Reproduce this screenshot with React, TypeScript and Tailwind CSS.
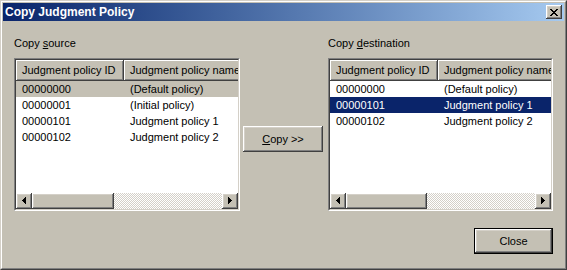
import React from "react";

const raised =
  "bg-[#c4c0b4] shadow-[inset_-1px_-1px_0_#404040,inset_1px_1px_0_#ffffff,inset_-2px_-2px_0_#808080,inset_2px_2px_0_#d4d0c8]";

const headerCell =
  "bg-[#c4c0b4] shadow-[inset_-1px_-1px_0_#404040,inset_1px_1px_0_#ffffff,inset_-2px_-2px_0_#808080]";

type Row = { id: string; name: string };

const sourceRows: Row[] = [
  { id: "00000000", name: "(Default policy)" },
  { id: "00000001", name: "(Initial policy)" },
  { id: "00000101", name: "Judgment policy 1" },
  { id: "00000102", name: "Judgment policy 2" },
];

const destRows: Row[] = [
  { id: "00000000", name: "(Default policy)" },
  { id: "00000101", name: "Judgment policy 1" },
  { id: "00000102", name: "Judgment policy 2" },
];

const Arrow = ({ dir }: { dir: "left" | "right" }) => (
  <svg width="16" height="16" viewBox="0 0 16 16" shapeRendering="crispEdges">
    {dir === "left" ? (
      <g fill="#000">
        <rect x="6" y="7" width="1" height="1" />
        <rect x="7" y="6" width="1" height="3" />
        <rect x="8" y="5" width="1" height="5" />
        <rect x="9" y="4" width="1" height="7" />
      </g>
    ) : (
      <g fill="#000">
        <rect x="6" y="4" width="1" height="7" />
        <rect x="7" y="5" width="1" height="5" />
        <rect x="8" y="6" width="1" height="3" />
        <rect x="9" y="7" width="1" height="1" />
      </g>
    )}
  </svg>
);

const CloseGlyph = () => (
  <svg width="8" height="7" viewBox="0 0 8 7" shapeRendering="crispEdges">
    <g fill="#000">
      <rect x="0" y="0" width="2" height="1" />
      <rect x="6" y="0" width="2" height="1" />
      <rect x="1" y="1" width="2" height="1" />
      <rect x="5" y="1" width="2" height="1" />
      <rect x="2" y="2" width="4" height="1" />
      <rect x="3" y="3" width="2" height="1" />
      <rect x="2" y="4" width="4" height="1" />
      <rect x="1" y="5" width="2" height="1" />
      <rect x="5" y="5" width="2" height="1" />
      <rect x="0" y="6" width="2" height="1" />
      <rect x="6" y="6" width="2" height="1" />
    </g>
  </svg>
);

const ScrollBar = ({ thumb }: { thumb: string }) => (
  <div className="flex h-[16px] shrink-0">
    <div className={`w-[16px] h-[16px] ${raised}`}>
      <Arrow dir="left" />
    </div>
    <div className={`${thumb} h-[16px] shrink-0 ${raised}`} />
    <div className="flex-1 bg-[image:conic-gradient(#ffffff_25%,#d4d0c8_0_50%,#ffffff_0_75%,#d4d0c8_0)] bg-size-[2px_2px]" />
    <div className={`w-[16px] h-[16px] ${raised}`}>
      <Arrow dir="right" />
    </div>
  </div>
);

const ListBox = ({
  width,
  thumb,
  rows,
  selected,
  active,
}: {
  width: string;
  thumb: string;
  rows: Row[];
  selected: number;
  active: boolean;
}) => (
  <div className={`${width} h-[153px] border border-[#808080] border-r-white border-b-white`}>
    <div className="h-full flex flex-col overflow-hidden bg-white border border-[#404040] border-r-[#d4d0c8] border-b-[#d4d0c8]">
      <div className="flex h-[21px] shrink-0 leading-[21px] whitespace-nowrap overflow-hidden">
        <div className={`w-[108px] shrink-0 pl-[6px] ${headerCell}`}>Judgment policy ID</div>
        <div className={`w-[140px] shrink-0 pl-[6px] ${headerCell}`}>Judgment policy name</div>
      </div>
      {rows.map((r, i) => {
        const sel = i === selected;
        return (
          <div
            key={r.id}
            className={`flex h-[16px] leading-[16px] whitespace-nowrap ${
              sel ? (active ? "bg-[#0a246a] text-white" : "bg-[#c4c0b4]") : ""
            }`}
          >
            <div className="w-[108px] shrink-0 pl-[6px]">{r.id}</div>
            <div className="pl-[6px]">{r.name}</div>
          </div>
        );
      })}
      <div className="flex-1" />
      <ScrollBar thumb={thumb} />
    </div>
  </div>
);

export default function App() {
  return (
    <div className="w-[567px] h-[270px] font-['Liberation_Sans',Arial,sans-serif] text-[11px] text-black">
      <div className="h-full border border-[#d4d0c8] border-r-[#404040] border-b-[#404040]">
        <div className="h-full flex flex-col bg-[#c4c0b4] p-px border border-white border-r-[#808080] border-b-[#808080]">
          {/* title bar */}
          <div className="h-[18px] shrink-0 flex items-center justify-between pl-[2px] pr-[2px] bg-linear-to-r from-[#0a246a] to-[#a6caf0]">
            <span className="text-white font-bold text-[12px] leading-[18px]">Copy Judgment Policy</span>
            <div className={`w-[16px] h-[14px] flex items-center justify-center ${raised}`}>
              <CloseGlyph />
            </div>
          </div>

          <div className="flex flex-col px-[11px] pt-[16px]">
            <div className="flex items-start">
              <div className="flex flex-col">
                <div className="h-[13px] leading-[13px] mb-[8px]">
                  Copy <u>s</u>ource
                </div>
                <ListBox width="w-[226px]" thumb="w-[82px]" rows={sourceRows} selected={0} active={false} />
              </div>

              <div
                className={`ml-[3px] mt-[89px] w-[80px] h-[26px] flex items-center justify-center ${raised}`}
              >
                <span>
                  <u>C</u>opy &gt;&gt;
                </span>
              </div>

              <div className="ml-[5px] flex flex-col">
                <div className="h-[13px] leading-[13px] mb-[8px]">
                  Copy <u>d</u>estination
                </div>
                <ListBox width="w-[225px]" thumb="w-[81px]" rows={destRows} selected={1} active={true} />
              </div>
            </div>

            <div className="flex justify-end mt-[17px]">
              <div className="w-[79px] h-[26px] border border-black">
                <div className={`h-full flex items-center justify-center ${raised}`}>Close</div>
              </div>
            </div>
          </div>
        </div>
      </div>
    </div>
  );
}
